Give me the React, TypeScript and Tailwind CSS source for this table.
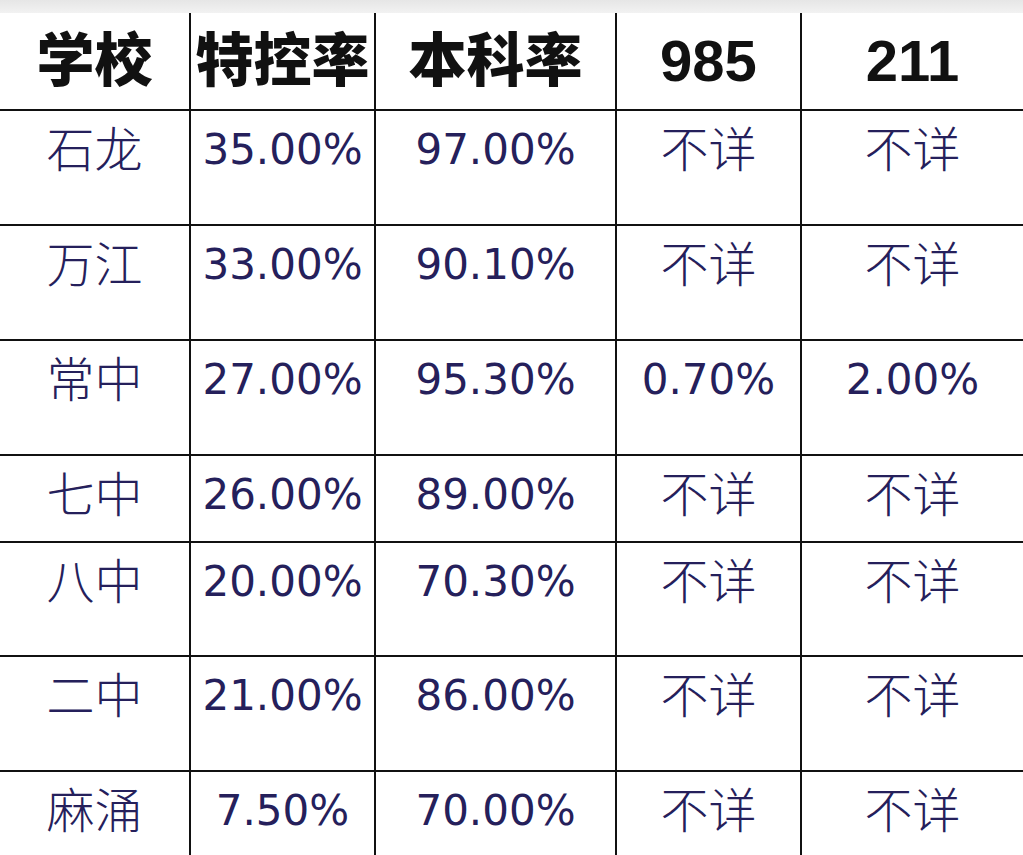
type Row = {
  school: string;
  special: string;
  bachelor: string;
  c985: string;
  c211: string;
  height: string;
};

const rows: Row[] = [
  { school: '石龙', special: '35.00%', bachelor: '97.00%', c985: '不详', c211: '不详', height: 'h-[115px]' },
  { school: '万江', special: '33.00%', bachelor: '90.10%', c985: '不详', c211: '不详', height: 'h-[115px]' },
  { school: '常中', special: '27.00%', bachelor: '95.30%', c985: '0.70%', c211: '2.00%', height: 'h-[115px]' },
  { school: '七中', special: '26.00%', bachelor: '89.00%', c985: '不详', c211: '不详', height: 'h-[87px]' },
  { school: '八中', special: '20.00%', bachelor: '70.30%', c985: '不详', c211: '不详', height: 'h-[114px]' },
  { school: '二中', special: '21.00%', bachelor: '86.00%', c985: '不详', c211: '不详', height: 'h-[115px]' },
  { school: '麻涌', special: '7.50%', bachelor: '70.00%', c985: '不详', c211: '不详', height: 'h-[115px]' },
];

const headers = ['学校', '特控率', '本科率', '985', '211'];

const gridCols = 'grid grid-cols-[191px_185px_241px_185px_1fr]';

function Cell({ text, last }: { text: string; last: boolean }) {
  const isNumber = text.includes('%');
  return (
    <div
      className={`flex justify-center pt-[15px] ${last ? '' : 'border-r-2 border-[#111]'}`}
    >
      <span
        className={`leading-[48px] whitespace-nowrap text-[#25205b] ${
          isNumber ? 'text-[42px]' : 'text-[48px] font-light'
        }`}
      >
        {text}
      </span>
    </div>
  );
}

export default function App() {
  return (
    <div className="w-[1023px] h-[855px] overflow-hidden bg-white font-['DejaVu_Sans','Noto_Sans_CJK_SC',sans-serif]">
      <div className="h-[13px] bg-gradient-to-b from-[#e6e6e6] to-[#f2f2f2]" />

      <div className={`${gridCols} h-[98px] border-b-2 border-[#111]`}>
        {headers.map((h, i) => (
          <div
            key={h}
            className={`flex items-center justify-center ${
              i < headers.length - 1 ? 'border-r-2 border-[#111]' : ''
            }`}
          >
            <span className="font-['Liberation_Sans','Noto_Sans_CJK_SC',sans-serif] font-black text-[58px] leading-none text-[#111] whitespace-nowrap">
              {h}
            </span>
          </div>
        ))}
      </div>

      {rows.map((r, idx) => {
        const cells = [r.school, r.special, r.bachelor, r.c985, r.c211];
        const isLast = idx === rows.length - 1;
        return (
          <div
            key={r.school}
            className={`${gridCols} ${r.height} ${isLast ? '' : 'border-b-2 border-[#111]'}`}
          >
            {cells.map((c, i) => (
              <Cell key={i} text={c} last={i === cells.length - 1} />
            ))}
          </div>
        );
      })}
    </div>
  );
}
